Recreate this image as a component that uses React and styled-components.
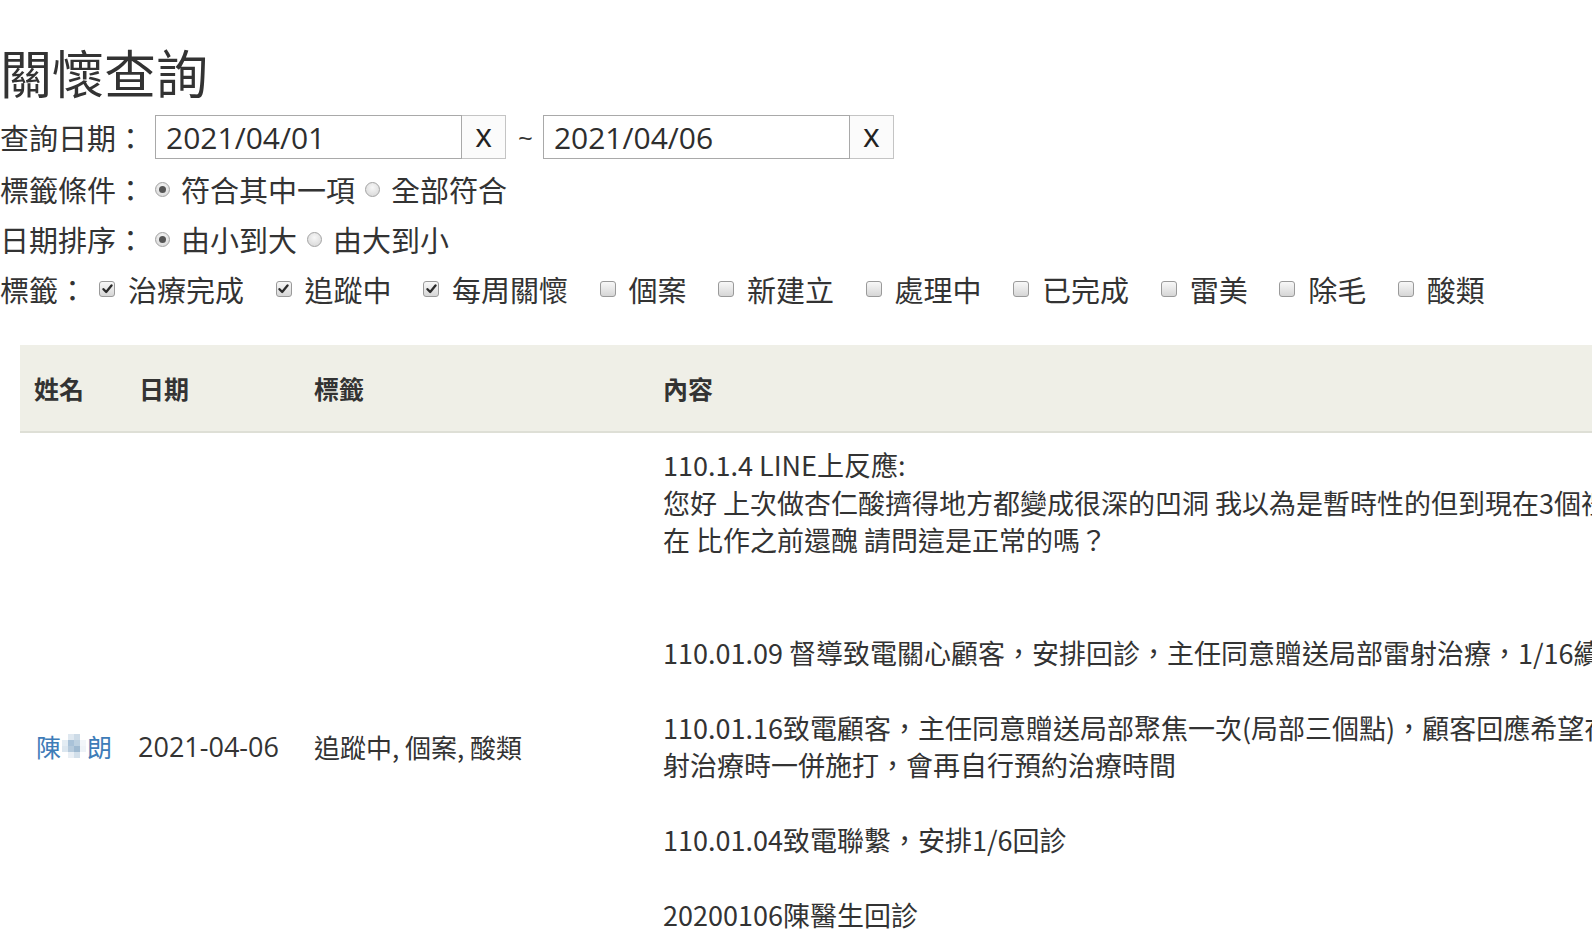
import React from "react";
import styled, { createGlobalStyle } from "styled-components";

const Global = createGlobalStyle`
  html, body { margin: 0; padding: 0; overflow: hidden; background: #fff; }
  body { font-family: "Open Sans", "Noto Sans CJK TC", sans-serif; color: #333; }
`;

const Page = styled.div`
  padding-top: 44px;
  width: 1900px;
`;

const Title = styled.h1`
  margin: 0;
  height: 56px;
  line-height: 56px;
  font-size: 52px;
  font-weight: 400;
  color: #333;
  font-family: "Noto Sans CJK TC", sans-serif;
`;

const Row = styled.div`
  display: flex;
  align-items: center;
  height: ${(p) => p.$h ?? 50}px;
  margin-top: ${(p) => p.$mt ?? 0}px;
  font-size: 29px;
  white-space: nowrap;
`;

const Label = styled.span`
  font-family: "Noto Sans CJK TC", sans-serif;
  font-size: 29px;
  color: #333;
  margin-right: ${(p) => p.$mr ?? 10}px;
`;

const DateInput = styled.div`
  box-sizing: border-box;
  width: 307px;
  height: 44px;
  border: 1px solid #a9a9a9;
  padding-left: 10px;
  display: flex;
  align-items: center;
  font-size: 30px;
  color: #2e2e2e;
  background: #fff;
  flex-shrink: 0;
`;

const ClearButton = styled.button`
  box-sizing: border-box;
  width: 44px;
  height: 44px;
  border: 1px solid #c4c4c4;
  border-left: none;
  background: #fbfbfb;
  font-family: "Open Sans", sans-serif;
  font-size: 32px;
  line-height: 1;
  color: #222;
  padding: 0 0 5px 0;
  flex-shrink: 0;
`;

const Tilde = styled.span`
  font-size: 26px;
  margin: 0 10px 0 12px;
  color: #333;
`;

const RadioDot = styled.span`
  box-sizing: border-box;
  display: inline-block;
  flex-shrink: 0;
  width: 15px;
  height: 15px;
  border-radius: 50%;
  border: 1px solid #a3a3a3;
  background: radial-gradient(circle at 50% 35%, #f7f7f7 0%, #d4d4d4 100%);
  position: relative;
  margin: 0 11px 0 ${(p) => p.$ml ?? 0}px;
  &::after {
    content: "";
    display: ${(p) => (p.$checked ? "block" : "none")};
    position: absolute;
    left: 3px;
    top: 3px;
    width: 7px;
    height: 7px;
    border-radius: 50%;
    background: #555;
  }
`;

const OptText = styled.span`
  font-family: "Noto Sans CJK TC", sans-serif;
  font-size: 29px;
  color: #333;
`;

const CheckBox = styled.span`
  box-sizing: border-box;
  display: inline-flex;
  flex-shrink: 0;
  align-items: center;
  justify-content: center;
  width: 16px;
  height: 16px;
  border-radius: 3px;
  border: 1px solid #9a9a9a;
  background: linear-gradient(#f8f8f8, #d6d6d6);
  margin: 0 13px 0 ${(p) => p.$ml}px;
`;

const Table = styled.div`
  margin: 31px 0 0 20px;
  width: 1860px;
`;

const HeaderRow = styled.div`
  display: grid;
  grid-template-columns: 105px 175px 349px 1fr;
  align-items: center;
  height: 86px;
  background: #efefe7;
  border-bottom: 2px solid #dedfd6;
`;

const HeadCell = styled.div`
  padding-left: 14px;
  font-family: "Noto Sans CJK TC", sans-serif;
  font-weight: 700;
  font-size: 25px;
  color: #333;
`;

const BodyRow = styled.div`
  display: grid;
  grid-template-columns: 105px 175px 349px 1fr;
  align-items: center;
`;

const Cell = styled.div`
  padding-left: ${(p) => p.$pl ?? 14}px;
  font-size: ${(p) => p.$fs ?? 26}px;
  color: #333;
  white-space: nowrap;
  font-family: ${(p) => (p.$cjk ? '"Noto Sans CJK TC", sans-serif' : '"Open Sans", "Noto Sans CJK TC", sans-serif')};
`;

const NameLink = styled.a`
  color: #3e7cb8;
  text-decoration: none;
  font-family: "Noto Sans CJK TC", sans-serif;
  font-size: 25px;
  display: inline-flex;
  align-items: center;
`;

const Mosaic = styled.span`
  display: inline-grid;
  grid-template-columns: repeat(4, 6px);
  grid-template-rows: repeat(4, 6px);
  margin: 0 1px;
`;

const MosaicPx = styled.span`
  background: ${(p) => p.$c};
`;

const ContentCell = styled.div`
  padding: 13px 14px 13px 14px;
  font-family: "Noto Sans CJK TC", sans-serif;
  font-size: 27px;
  color: #333;
`;

const Line = styled.div`
  height: 37.5px;
  line-height: 37.5px;
  white-space: nowrap;
`;

const mosaicColors = [
  "#fff", "#dfe8f0", "#cddbe7", "#fff",
  "#e3ecf3", "#a9c2d8", "#bcd0e0", "#f2f6f9",
  "#dbe6ef", "#b5cadc", "#9fbad1", "#eef3f7",
  "#fff", "#e9eff5", "#d2dfea", "#fff",
];

const Check = () => (
  <svg width="11" height="10" viewBox="0 0 11 10">
    <path d="M1.5 5.2 L4.2 8 L9.5 1.5" fill="none" stroke="#2b2b2b" strokeWidth="2.3" strokeLinecap="round" strokeLinejoin="round" />
  </svg>
);

const tags = [
  ["治療完成", true],
  ["追蹤中", true],
  ["每周關懷", true],
  ["個案", false],
  ["新建立", false],
  ["處理中", false],
  ["已完成", false],
  ["雷美", false],
  ["除毛", false],
  ["酸類", false],
];

const lines = [
  "110.1.4 LINE上反應:",
  "您好 上次做杏仁酸擠得地方都變成很深的凹洞 我以為是暫時性的但到現在3個禮拜了還是沒有好 反而覺得現",
  "在 比作之前還醜 請問這是正常的嗎？",
  "",
  "",
  "110.01.09 督導致電關心顧客，安排回診，主任同意贈送局部雷射治療，1/16續診",
  "",
  "110.01.16致電顧客，主任同意贈送局部聚焦一次(局部三個點)，顧客回應希望在下次做雷",
  "射治療時一併施打，會再自行預約治療時間",
  "",
  "110.01.04致電聯繫，安排1/6回診",
  "",
  "20200106陳醫生回診",
  "凹洞處以局部雷射治療改善，術後需加強保濕及防曬",
  "",
  "",
];

export default function App() {
  return (
    <>
      <Global />
      <Page>
        <Title>關懷查詢</Title>
        <Row $h={44} $mt={15}>
          <Label>查詢日期：</Label>
          <DateInput>2021/04/01</DateInput>
          <ClearButton>x</ClearButton>
          <Tilde>~</Tilde>
          <DateInput>2021/04/06</DateInput>
          <ClearButton>x</ClearButton>
        </Row>
        <Row $mt={5}>
          <Label>標籤條件：</Label>
          <RadioDot $checked />
          <OptText>符合其中一項</OptText>
          <RadioDot $ml={10} />
          <OptText>全部符合</OptText>
        </Row>
        <Row>
          <Label>日期排序：</Label>
          <RadioDot $checked />
          <OptText>由小到大</OptText>
          <RadioDot $ml={10} />
          <OptText>由大到小</OptText>
        </Row>
        <Row>
          <Label $mr={0}>標籤：</Label>
          {tags.map(([t, on], i) => (
            <React.Fragment key={t}>
              <CheckBox $ml={i === 0 ? 12 : 31.5}>{on && <Check />}</CheckBox>
              <OptText>{t}</OptText>
            </React.Fragment>
          ))}
        </Row>
        <Table>
          <HeaderRow>
            <HeadCell>姓名</HeadCell>
            <HeadCell>日期</HeadCell>
            <HeadCell>標籤</HeadCell>
            <HeadCell>內容</HeadCell>
          </HeaderRow>
          <BodyRow>
            <Cell $pl={16}>
              <NameLink href="#">
                陳
                <Mosaic>
                  {mosaicColors.map((c, i) => (
                    <MosaicPx key={i} $c={c} />
                  ))}
                </Mosaic>
                朗
              </NameLink>
            </Cell>
            <Cell $pl={13} $fs={27}>2021-04-06</Cell>
            <Cell $cjk>追蹤中, 個案, 酸類</Cell>
            <ContentCell>
              {lines.map((l, i) => (
                <Line key={i}>{l || "\u00a0"}</Line>
              ))}
            </ContentCell>
          </BodyRow>
        </Table>
      </Page>
    </>
  );
}
